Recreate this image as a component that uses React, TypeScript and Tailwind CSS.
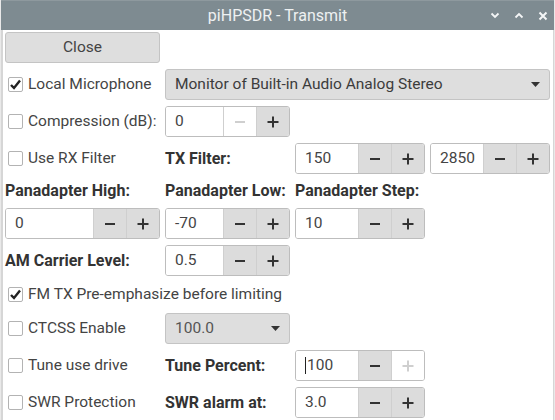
import React from "react";

function Minus({ disabled }: { disabled?: boolean }) {
  return (
    <svg width="12" height="12" viewBox="0 0 12 12">
      <rect x="1" y="5" width="10" height="2" fill={disabled ? "#cfcfcf" : "#333333"} />
    </svg>
  );
}

function Plus({ disabled }: { disabled?: boolean }) {
  return (
    <svg width="12" height="12" viewBox="0 0 12 12">
      <rect x="0.5" y="5" width="11" height="2" fill={disabled ? "#cfcfcf" : "#333333"} />
      <rect x="5" y="0.5" width="2" height="11" fill={disabled ? "#cfcfcf" : "#333333"} />
    </svg>
  );
}

function Spin({
  value,
  minusOff,
  plusOff,
  cursor,
}: {
  value: string;
  minusOff?: boolean;
  plusOff?: boolean;
  cursor?: boolean;
}) {
  return (
    <div className="flex h-[31px] overflow-hidden rounded-[3px] border border-[#bdbdbd]">
      <div className="flex min-w-0 flex-1 items-center bg-white pl-[9px] text-[#444]">
        {cursor && <span className="mr-[1px] h-[17px] w-[1px] bg-[#222]" />}
        {value}
      </div>
      <div
        className={`flex w-[33px] items-center justify-center border-l border-[#cfcfcf] ${
          minusOff ? "bg-white" : "bg-[#dcdcdc]"
        }`}
      >
        <Minus disabled={minusOff} />
      </div>
      <div
        className={`flex w-[33px] items-center justify-center border-l border-[#cfcfcf] ${
          plusOff ? "bg-white" : "bg-[#dcdcdc]"
        }`}
      >
        <Plus disabled={plusOff} />
      </div>
    </div>
  );
}

function Check({ label, checked }: { label: string; checked?: boolean }) {
  return (
    <div className="flex items-center gap-[5px] pl-[3px] text-[#444]">
      <span className="flex h-[15px] w-[15px] items-center justify-center rounded-[2px] border border-[#b3b3b3] bg-white">
        {checked && (
          <svg width="13" height="13" viewBox="0 0 13 13">
            <path d="M2 7 L5 10 L11 2.5" stroke="#222" strokeWidth="2.4" fill="none" />
          </svg>
        )}
      </span>
      <span className="whitespace-nowrap">{label}</span>
    </div>
  );
}

function Combo({ text, grey }: { text: string; grey?: boolean }) {
  return (
    <div className="flex h-[31px] items-center justify-between rounded-[3px] border border-[#c4c4c4] bg-[#dedede] pl-[9px] pr-[9px]">
      <span className={grey ? "text-[#555]" : "text-[#3c3c3c]"}>{text}</span>
      <svg width="9" height="5" viewBox="0 0 9 5">
        <path d="M0 0 H9 L4.5 5 Z" fill="#333" />
      </svg>
    </div>
  );
}

function Bold({ children }: { children: React.ReactNode }) {
  return (
    <div className="flex items-center whitespace-nowrap text-[16px] font-bold text-[#333]">
      {children}
    </div>
  );
}

export default function App() {
  return (
    <div className="h-[420px] w-[555px] overflow-hidden bg-[#e9e9e9] font-['Roboto','Liberation_Sans',sans-serif] text-[15.5px]">
      <div className="mx-auto h-full w-[553px] bg-white">
        <div className="relative flex h-[30px] items-center justify-center border-t border-[#8e999e] bg-[#7e8b91] text-[16px] text-[#eef1f2]">
          piHPSDR - Transmit
          <div className="absolute right-[6px] top-0 flex h-full items-center gap-[14px]">
            <svg width="10" height="7" viewBox="0 0 10 7">
              <path d="M1.5 1.5 L5 5 L8.5 1.5" stroke="#f4f6f7" strokeWidth="1.8" fill="none" />
            </svg>
            <svg width="10" height="7" viewBox="0 0 10 7">
              <path d="M1.5 5.5 L5 2 L8.5 5.5" stroke="#f4f6f7" strokeWidth="1.8" fill="none" />
            </svg>
            <svg width="10" height="10" viewBox="0 0 10 10">
              <path d="M1.5 1.5 L8.5 8.5 M8.5 1.5 L1.5 8.5" stroke="#f4f6f7" strokeWidth="2" fill="none" />
            </svg>
          </div>
        </div>
        <div className="h-[390px] border-l-2 border-r border-[#d6d6d6] pl-[2px] pt-[2px]">
          <div className="grid grid-cols-[155px_125px_130px_120px] grid-rows-[31px_31px_31px_31px_22px_31px_31px_25px_31px_31px_31px] gap-x-[5px] gap-y-[6px]">
            <div className="col-start-1 row-start-1 flex items-center justify-center rounded-[3px] border border-[#c4c4c4] bg-[#dedede] text-[#444]">
              Close
            </div>

            <div className="col-start-1 row-start-2 flex">
              <Check label="Local Microphone" checked />
            </div>
            <div className="col-span-3 col-start-2 row-start-2">
              <Combo text="Monitor of Built-in Audio Analog Stereo" />
            </div>

            <div className="col-start-1 row-start-3 flex">
              <Check label="Compression (dB):" />
            </div>
            <div className="col-start-2 row-start-3">
              <Spin value="0" minusOff />
            </div>

            <div className="col-start-1 row-start-4 flex">
              <Check label="Use RX Filter" />
            </div>
            <div className="col-start-2 row-start-4 flex">
              <Bold>TX Filter:</Bold>
            </div>
            <div className="col-start-3 row-start-4">
              <Spin value="150" />
            </div>
            <div className="col-start-4 row-start-4">
              <Spin value="2850" />
            </div>

            <div className="col-start-1 row-start-5 flex">
              <Bold>Panadapter High:</Bold>
            </div>
            <div className="col-start-2 row-start-5 flex">
              <Bold>Panadapter Low:</Bold>
            </div>
            <div className="col-start-3 row-start-5 flex">
              <Bold>Panadapter Step:</Bold>
            </div>

            <div className="col-start-1 row-start-6">
              <Spin value="0" />
            </div>
            <div className="col-start-2 row-start-6">
              <Spin value="-70" />
            </div>
            <div className="col-start-3 row-start-6">
              <Spin value="10" />
            </div>

            <div className="col-start-1 row-start-7 flex">
              <Bold>AM Carrier Level:</Bold>
            </div>
            <div className="col-start-2 row-start-7">
              <Spin value="0.5" />
            </div>

            <div className="col-span-3 col-start-1 row-start-8 flex">
              <Check label="FM TX Pre-emphasize before limiting" checked />
            </div>

            <div className="col-start-1 row-start-9 flex">
              <Check label="CTCSS Enable" />
            </div>
            <div className="col-start-2 row-start-9">
              <Combo text="100.0" grey />
            </div>

            <div className="col-start-1 row-start-10 flex">
              <Check label="Tune use drive" />
            </div>
            <div className="col-start-2 row-start-10 flex">
              <Bold>Tune Percent:</Bold>
            </div>
            <div className="col-start-3 row-start-10">
              <Spin value="100" plusOff cursor />
            </div>

            <div className="col-start-1 row-start-11 flex">
              <Check label="SWR Protection" />
            </div>
            <div className="col-start-2 row-start-11 flex">
              <Bold>SWR alarm at:</Bold>
            </div>
            <div className="col-start-3 row-start-11">
              <Spin value="3.0" />
            </div>
          </div>
        </div>
      </div>
    </div>
  );
}
